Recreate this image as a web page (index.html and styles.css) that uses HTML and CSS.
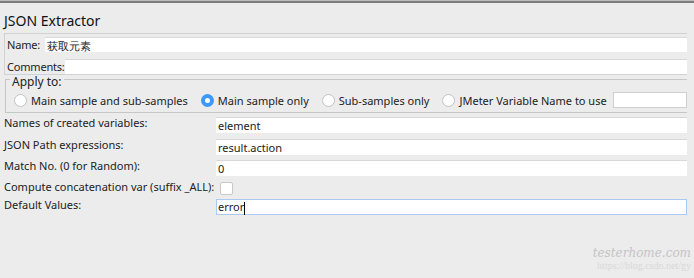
FILE: index.html
```html
<!DOCTYPE html>
<html lang="en">

<head>
  <meta charset="UTF-8">
  <title>JSON Extractor</title>
  <link rel="stylesheet" href="styles.css">
</head>

<body>
  <div class="topline"></div>

  <div class="panel">
    <h1 class="title">JSON Extractor</h1>

    <!-- Name / comments -->
    <div class="group">
      <div class="line">
        <span class="lbl name-lbl">Name:</span>
        <div class="field">获取元素</div>
      </div>
      <div class="line">
        <span class="lbl">Comments:</span>
        <div class="field"></div>
      </div>
    </div>

    <!-- Apply to -->
    <fieldset class="apply">
      <legend>Apply to:</legend>
      <div class="radios">
        <label class="radio"><span class="dot"></span>Main sample and sub-samples</label>
        <label class="radio on"><span class="dot"></span>Main sample only</label>
        <label class="radio"><span class="dot"></span>Sub-samples only</label>
        <label class="radio"><span class="dot"></span>JMeter Variable Name to use</label>
        <div class="field var-field"></div>
      </div>
    </fieldset>

    <!-- Extractor settings -->
    <div class="rows">
      <span class="lbl">Names of created variables:</span>
      <div class="field">element</div>

      <span class="lbl">JSON Path expressions:</span>
      <div class="field">result.action</div>

      <span class="lbl">Match No. (0 for Random):</span>
      <div class="field">0</div>

      <span class="lbl">Compute concatenation var (suffix _ALL):</span>
      <div class="check-cell"><span class="check"></span></div>

      <span class="lbl">Default Values:</span>
      <div class="field focus">error<span class="caret"></span></div>
    </div>
  </div>

  <div class="mark">
    <span class="mark-logo">testerhome.com</span>
    <span class="mark-url">https://blog.csdn.net/gy</span>
  </div>
</body>

</html>
```

FILE: styles.css
```css
body {
  margin: 0;
  background-color: #ececec;
  color: #222;
  font-family: "Lucida Grande", "Noto Sans", sans-serif;
  font-size: 11px;
  width: 694px;
  height: 278px;
  overflow: hidden;
  position: relative;
}

.topline {
  height: 1px;
  border-bottom: 2px solid #7d7d7d;
  background-color: #bdbdbd;
}

.panel {
  padding: 0 7px 0 4px;
}

.title {
  font-size: 14px;
  font-weight: normal;
  margin: 0;
  height: 30px;
  line-height: 36px;
  color: #111;
}

.group {
  border: 1px solid #d2d2d2;
  border-right: none;
  padding: 3px 0 0 0;
  height: 37px;
}

.line {
  display: flex;
  align-items: center;
  height: 15px;
  margin-bottom: 7px;
}

.line .lbl {
  padding-left: 2px;
  white-space: nowrap;
  letter-spacing: -0.2px;
}

.line .name-lbl {
  width: 38px;
}

.field {
  flex: 1;
  background-color: #fff;
  border-top: 1px solid #d8d8d8;
  height: 15px;
  line-height: 15px;
  padding-left: 2px;
  box-sizing: border-box;
}

.apply {
  margin: -5px 0 0 1px;
  padding: 0;
  border: 1px solid #c6c6c6;
  border-right: none;
  height: 43px;
  box-sizing: border-box;
}

.apply legend {
  padding: 6px 2px 0 2px;
  margin-left: 4px;
  font-size: 12px;
  line-height: 12px;
}

.radios {
  display: flex;
  align-items: center;
  height: 24px;
}

.radio {
  display: flex;
  align-items: center;
  margin-left: 13px;
  white-space: nowrap;
}

.radio:first-child {
  margin-left: 8px;
}

.dot {
  width: 13px;
  height: 13px;
  border-radius: 50%;
  background-color: #fff;
  border: 1px solid #c2c2c2;
  box-sizing: border-box;
  margin-right: 4px;
}

.radio.on .dot {
  border: 4px solid #3b99fc;
}

.var-field {
  height: 16px;
  border: 1px solid #cfcfcf;
  margin-left: 6px;
}

.rows {
  display: grid;
  grid-template-columns: 212px 1fr;
  grid-template-rows: 17px 16px 16px 13px 16px;
  row-gap: 5px;
  margin-top: 4px;
}

.rows .lbl {
  line-height: 12px;
  white-space: nowrap;
}

.rows .field {
  height: 16px;
  line-height: 16px;
}

.check {
  display: block;
  width: 11px;
  height: 11px;
  margin: 1px 0 0 4px;
  background-color: #fff;
  border: 1px solid #c8c8c8;
  border-radius: 2px;
}

.field.focus {
  border: 1px solid #a9c9f2;
  line-height: 14px;
  padding-left: 1px;
}

.caret {
  display: inline-block;
  width: 1px;
  height: 13px;
  background-color: #000;
  vertical-align: middle;
}

.mark {
  position: absolute;
  right: 3px;
  bottom: 7px;
  display: flex;
  flex-direction: column;
  align-items: flex-end;
}

.mark-logo {
  font-family: "DejaVu Serif", serif;
  font-style: italic;
  font-size: 12px;
  color: #c4c4c4;
}

.mark-url {
  font-family: "Liberation Serif", serif;
  font-size: 10px;
  color: #d8d8d8;
}
```
